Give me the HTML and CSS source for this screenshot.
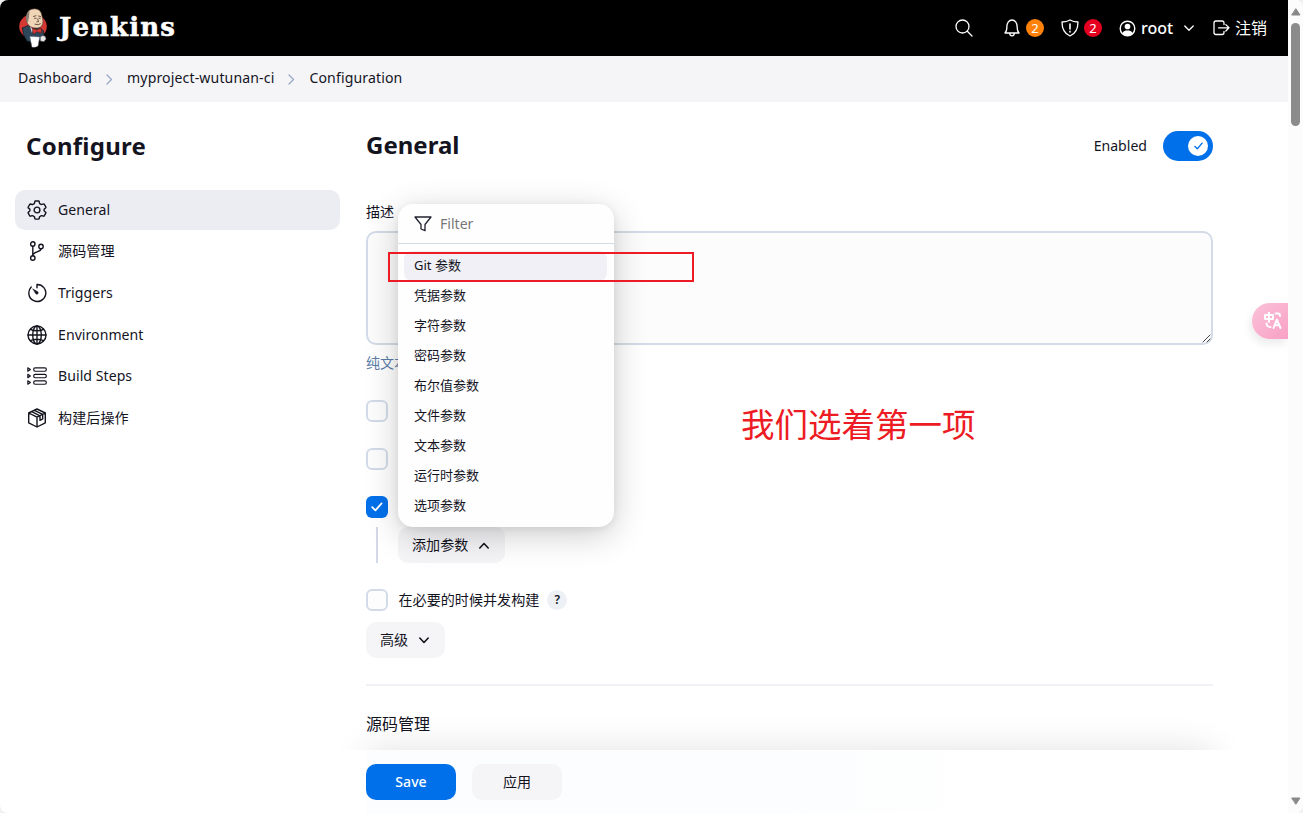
FILE: index.html
```html
<!DOCTYPE html>
<html lang="zh-CN">
<head>
<meta charset="utf-8">
<title>Configuration - Jenkins</title>
<link rel="stylesheet" href="styles.css">
</head>
<body>
<div class="window">
  <div class="page">
    <header class="header">
      <svg class="logo" viewBox="0 0 30 40">
        <ellipse cx="14" cy="18.500" rx="13.800" ry="12.500" fill="#d33833"/>
        <path d="M3.500 20 L9 17.500 L14 21 L21 19.500 L24.500 23 L25 29 L17 35 L8 33 Q3 26 3.500 20Z" fill="#2c475a" stroke="#111d26" stroke-width=".7"/>
        <path d="M7.500 7 Q9 .8 15.500 .8 Q22 .8 23 8 L24 13 Q24 19 19 20 Q12 20.500 9.500 17 Q6.500 14 7.500 7Z" fill="#f0d6b7" stroke="#49372c" stroke-width=".6"/>
        <path d="M7.500 8 Q8 4 10.500 2.500 L10 9 L9 14.500 Q6 12 7.500 8Z" fill="#8b7f74"/>
        <path d="M14.500 8.500l2.500-.8M19.500 8l2 .5M15.500 10.300h1.600M20 10.300h1.300M18.600 11l1 2.600-1.700.3M16 16.300q3 1.200 5.500-.5" fill="none" stroke="#49372c" stroke-width=".8"/>
        <path d="M11 18.500 L14 21.500 L13 25Z" fill="#dfe8ee"/>
        <path d="M13.500 20.500 L17.800 22 L22 20 L22.500 25 L18 23.700 L14.500 26Z" fill="#d33833" stroke="#7b1515" stroke-width=".6"/>
        <path d="M11 28.500 L20.500 29 L19 38 Q16 40 13 39Z" fill="#fff" stroke="#889" stroke-width=".4"/>
        <path d="M21.500 29q2-1.800 4.500-.8l1 2.800-2 2.500-3.500-.5z" fill="#e8e8e8" stroke="#777" stroke-width=".5"/>
      </svg>
      <span class="wordmark">Jenkins</span>
      <div class="header-tools">
        <svg class="i-search" viewBox="0 0 18 18"><circle cx="7.500" cy="7.500" r="6.500"/><path d="M12.300 12.300l4.700 4.700"/></svg>
        <svg class="i-bell" viewBox="0 0 16 18"><path d="M1 14c1.600-1.600 1.900-3 1.900-6.500C2.900 4 5 1 8 1s5.100 3 5.100 6.500c0 3.500.3 4.900 1.900 6.500zM5.700 14.500c.2 3.200 4.400 3.200 4.600 0"/></svg>
        <span class="badge badge-orange">2</span>
        <svg class="i-shield" viewBox="0 0 18 18"><path d="M9 1C6.500 2.500 4 3 1 3c0 7.500 2 11.500 8 14 6-2.500 8-6.500 8-14-3 0-5.500-.5-8-2z"/><path d="M9 5v5M9 12.300v.6" stroke-width="1.600"/></svg>
        <span class="badge badge-red">2</span>
        <svg class="i-user" viewBox="0 0 18 18"><circle cx="9" cy="9" r="7.700" stroke-width="1.500"/><circle cx="9" cy="6.900" r="3" fill="#fff" stroke="none"/><path d="M3.500 14c1.300-2.600 3-3 5.500-3s4.200.4 5.500 3c-2.700 3.200-8.300 3.200-11 0z" fill="#fff" stroke="none"/></svg>
        <span class="user">root</span>
        <svg class="i-caret" viewBox="0 0 10 7"><path d="M.8 1l4.200 4.300L9.200 1"/></svg>
        <svg class="i-out" viewBox="0 0 17 16"><path d="M11 4.500V3.200C11 1.600 10.400 1 9 1H3C1.600 1 1 1.600 1 3v9.500c0 1.400.6 2 2 2h6c1.400 0 2-.6 2-2v-1.200M5.500 7.800H16M12.800 4.600L16 7.800l-3.200 3.200"/></svg>
        <span class="logout">注销</span>
      </div>
    </header>

    <nav class="crumbs">
      <span class="crumb">Dashboard</span>
      <svg viewBox="0 0 7 11"><path d="M1 1l4.500 4.500L1 10"/></svg>
      <span class="crumb">myproject-wutunan-ci</span>
      <svg viewBox="0 0 7 11"><path d="M1 1l4.500 4.500L1 10"/></svg>
      <span class="crumb">Configuration</span>
    </nav>

    <div class="body">
      <aside class="side">
        <h1>Configure</h1>
        <ul class="tasks">
          <li class="active"><svg viewBox="0 0 20 20"><path d="M8.400 1h3.200q.5 0 .6.600l.3 1.500q.1.500.6.700l.9.500q.4.200.9.100l1.500-.5q.5-.2.800.3l1.600 2.700q.3.500-.1.900l-1.200 1.100q-.4.300-.4.800v.700q0 .5.400.8l1.200 1.100q.4.400.1.900l-1.600 2.700q-.3.500-.8.300l-1.500-.5q-.5-.1-.9.100l-.9.500q-.5.200-.6.700l-.3 1.500q-.1.600-.6.600H8.400q-.5 0-.6-.6l-.3-1.500q-.1-.5-.6-.7l-.9-.5q-.4-.2-.9-.1l-1.500.5q-.5.200-.8-.3l-1.600-2.700q-.3-.5.1-.9l1.200-1.100q.4-.3.400-.8v-.7q0-.5-.4-.8L1.300 7.900q-.4-.4-.1-.9l1.600-2.700q.3-.5.8-.3l1.500.5q.5.100.9-.1l.9-.5q.5-.2.600-.7l.3-1.600q.1-.6.6-.6z"/><circle cx="10" cy="10" r="2.900"/></svg><span>General</span></li>
          <li class="up"><svg viewBox="0 0 20 20"><circle cx="5.800" cy="3" r="2.200"/><circle cx="5.800" cy="17" r="2.200"/><circle cx="14" cy="5.500" r="2.200"/><path d="M5.800 5.200v9.600M14 7.700c0 4-8.200 2.500-8.200 7"/></svg><span>源码管理</span></li>
          <li><svg viewBox="0 0 20 20"><path d="M4.200 4.100A8.500 8.500 0 1 0 10 1.500v3.300"/><path d="M6 6l4.800 2.800a1.400 1.400 0 1 1-2 2z" fill="#14141f" stroke-width=".5"/></svg><span>Triggers</span></li>
          <li><svg viewBox="0 0 20 20"><circle cx="10" cy="10" r="9"/><ellipse cx="10" cy="10" rx="4.300" ry="9"/><path d="M10 1v18M1 10h18M3.500 4.300c3.500 2 9.500 2 13 0M3.500 15.700c3.500-2 9.500-2 13 0"/></svg><span>Environment</span></li>
          <li><svg class="thin" viewBox="0 0 20 20"><rect x="6.700" y="1.800" width="12.600" height="3.400" rx="1.400"/><rect x="6.700" y="8.300" width="12.600" height="3.400" rx="1.400"/><rect x="6.700" y="14.800" width="12.600" height="3.400" rx="1.400"/><path d="M.8 1.800L3.400 3.500.8 5.200zM.8 8.300l2.600 1.700-2.600 1.700zM.8 14.800l2.600 1.700-2.600 1.700z"/></svg><span>Build Steps</span></li>
          <li><svg viewBox="0 0 20 20"><path d="M10 1l8.300 4v9.800L10 19l-8.300-4.200V5zM1.700 5L10 9.200 18.300 5M10 9.200V19M4.700 3.700l8.300 4.200v4.500l2.700-1.500V6.400L7.400 2.300"/></svg><span>构建后操作</span></li>
        </ul>
      </aside>

      <main class="main">
        <div class="title-row">
          <h2>General</h2>
          <span class="enabled">Enabled</span>
          <span class="toggle"><span class="knob"><svg viewBox="0 0 10 9"><path d="M1 5l2.700 2.700L9 1.300"/></svg></span></span>
        </div>
        <div class="label">描述</div>
        <div class="textarea"><svg class="grip" viewBox="0 0 9 9"><path d="M1 8L8 1M5 8l3-3"/></svg></div>
        <div class="preview">纯文本</div>
        <div class="checks">
          <span class="check"></span>
          <span class="check"></span>
          <span class="check on"><svg viewBox="0 0 12 10"><path d="M1.200 5.200l3.200 3.200 6.200-7"/></svg></span>
        </div>
        <div class="nested">
          <div class="popup-anchor">
            <button class="btn add">添加参数<svg viewBox="0 0 10 7"><path d="M.8 6L5 1.500 9.200 6"/></svg></button>
            <div class="menu">
              <div class="filter"><svg viewBox="0 0 18 16"><path d="M1 1h16l-6 7.500v6.200l-4-1.700V8.500z"/></svg><span>Filter</span></div>
              <ul>
                <li class="hover">Git 参数</li>
                <li>凭据参数</li>
                <li>字符参数</li>
                <li>密码参数</li>
                <li>布尔值参数</li>
                <li>文件参数</li>
                <li>文本参数</li>
                <li>运行时参数</li>
                <li>选项参数</li>
              </ul>
            </div>
          </div>
        </div>
        <div class="concurrent"><span class="check"></span><span class="ctext">在必要的时候并发构建</span><span class="help">?</span></div>
        <button class="btn adv">高级<svg viewBox="0 0 10 7"><path d="M.8 1L5 5.500 9.200 1"/></svg></button>
        <div class="rule"></div>
        <div class="section">源码管理</div>
        <div class="actions">
          <button class="btn save">Save</button>
          <button class="btn apply">应用</button>
        </div>
      </main>
    </div>
  </div>
  <div class="scrollbar">
    <svg viewBox="0 0 10 8"><path d="M5 1l4 6H1z"/></svg>
    <div class="thumb"></div>
    <svg class="down" viewBox="0 0 10 8"><path d="M1 1h8L5 7z"/></svg>
  </div>
  <div class="translate"><svg viewBox="0 0 18 17"><path d="M1 3h8v4H1zM5 .5V10M11.500 1.500H14q2 0 2 2.500M2.500 11.500q0 3.500 4 3.500M9.500 16l3.300-8.500L16.500 16M10.800 13.200h4.400"/></svg></div>
  <div class="mark-box"></div>
  <div class="mark-text">我们选着第一项</div>
</div>
</body>
</html>
```
FILE: styles.css
```css
* { box-sizing: border-box; }
body { margin: 0; background: #f0f1f3; color: #14141f; font: 14.080px/20px "Noto Sans", "Noto Sans CJK SC", sans-serif; }
h1, h2, ul { margin: 0; padding: 0; }
ul { list-style: none; }
svg { display: block; flex: none; fill: none; stroke: currentColor; stroke-width: 1.4; stroke-linejoin: round; stroke-linecap: round; }
.window { position: relative; display: flex; width: 1303px; height: 813px; overflow: hidden; border-radius: 8px; background: #fff; }
.page { width: 1288px; height: 813px; display: flex; flex-direction: column; overflow: hidden; }

.header { height: 56px; flex: none; background: #000; color: #fff; display: flex; align-items: center; padding: 0 18px 0 19px; }
.logo { width: 30px; height: 40px; stroke: none; }
.wordmark { font: bold 26px/34px "DejaVu Serif", serif; letter-spacing: 1.100px; -webkit-text-stroke: .5px #fff; margin: -3px 0 0 10px; }
.header-tools { margin-left: auto; display: flex; align-items: center; }
.header-tools svg { stroke-width: 1.300; }
.i-search { width: 18px; height: 18px; margin-right: 31px; }
.i-bell { width: 16px; height: 18px; margin-right: 6px; }
.badge { width: 18px; height: 18px; border-radius: 9px; font-size: 13px; line-height: 18px; text-align: center; }
.badge-orange { background: #fe820a; margin-right: 17px; }
.badge-red { background: #e6001f; margin-right: 17px; }
.header-tools .i-shield { width: 18px; height: 18px; margin-right: 5px; }
.i-user { width: 17px; height: 17px; margin-right: 5px; }
.user { font-size: 16px; font-weight: 500; width: 33px; margin-right: 10px; }
.i-caret { width: 10px; height: 7px; margin-right: 19px; }
.i-out { width: 17px; height: 16px; margin-right: 5px; }
.logout { font-size: 16px; width: 35px; }

.crumbs { height: 46px; flex: none; background: #f5f5f8; display: flex; align-items: center; padding: 0 18px 2px; }
.crumb { letter-spacing: .13px; }
.crumbs svg { width: 7px; height: 11px; margin: 2px 14px 0 14px; color: #98a8c4; stroke-width: 1.300; }

.body { flex: 1; display: flex; min-height: 0; }
.side { width: 340px; padding: 26px 0 0 15px; }
.side h1 { font-size: 24px; line-height: 36px; padding-left: 11px; letter-spacing: .25px; }
.tasks { margin-top: 26px; display: flex; flex-direction: column; gap: 1.600px; }
.tasks li { height: 40px; border-radius: 10px; display: flex; align-items: center; padding-left: 12px; gap: 11px; letter-spacing: .05px; }
.tasks .active { background: #ecedf3; }
.tasks .up { padding-bottom: 1px; }
.tasks svg { width: 20px; height: 20px; }
.tasks .thin { stroke-width: 1.150; }

.main { margin-left: 26px; width: 847px; display: flex; flex-direction: column; }
.title-row { display: flex; align-items: center; height: 36px; margin-top: 26px; }
.title-row h2 { font-size: 24px; line-height: 36px; flex: 1; margin-top: -2px; }
.enabled { margin-right: 16px; }
.toggle { width: 50px; height: 30px; border-radius: 15px; background: #0070ea; display: flex; justify-content: flex-end; align-items: center; padding: 5px; }
.knob { width: 20px; height: 20px; border-radius: 50%; background: #fff; color: #0070ea; display: grid; place-items: center; }
.knob svg { width: 9px; height: 8px; stroke-width: 1.600; }
.label { margin-top: 38px; }
.textarea { margin-top: 9px; height: 114px; border: 2px solid #d3dbe8; border-radius: 10px; background: #fcfcfd; display: flex; align-items: flex-end; justify-content: flex-end; }
.grip { width: 9px; height: 9px; stroke-width: .9; color: #333; }
.preview { margin-top: 8px; color: #5a7da8; }
.checks { margin-top: 27px; display: flex; flex-direction: column; gap: 26px; }
.check { width: 22px; height: 22px; flex: none; border: 2px solid #d3dbe8; border-radius: 6px; background: #fdfdfe; }
.check.on { background: #0070ea; border: 0; color: #fff; display: grid; place-items: center; }
.check svg { width: 12px; height: 10px; stroke-width: 1.800; }
.nested { height: 36px; margin: 9px 0 0 10px; padding-left: 20px; border-left: 2px solid #d3d9e6; }
.popup-anchor { position: relative; width: 107px; }
.btn { height: 36px; border: 0; border-radius: 10px; background: #f5f5f8; color: inherit; font: inherit; padding: 0; display: flex; align-items: center; justify-content: center; gap: 11px; }
.btn svg { width: 10px; height: 7px; stroke-width: 1.600; }
.btn.add, .btn.adv { justify-content: flex-start; padding-left: 14px; }
.btn.add { width: 107px; }
.menu { position: absolute; left: 0; bottom: 36px; width: 216px; height: 323px; z-index: 2; background: #fefefe; border-radius: 15px; box-shadow: 0 8px 34px rgba(0, 0, 0, .2), 0 2px 8px rgba(0, 0, 20, .07); }
.filter { height: 40px; border-bottom: 1px solid #d3dbe8; display: flex; align-items: center; gap: 8px; padding-left: 16px; color: #777; }
.filter svg { width: 18px; height: 16px; color: #222230; stroke-width: 1.300; }
.menu ul { padding: 7px 7px 0 6px; }
.menu li { height: 30px; border-radius: 8px; padding: 0 10px; font-size: 13px; line-height: 29px; }
.menu .hover { background: #f1f0f6; }
.concurrent { margin-top: 26px; display: flex; align-items: center; height: 22px; }
.ctext { margin-left: 10.500px; }
.help { width: 20px; height: 20px; margin-left: 8px; border-radius: 50%; background: #edf0f4; font-size: 12px; font-weight: 600; text-align: center; }
.btn.adv { width: 79px; margin-top: 11px; }
.rule { height: 2px; background: #f1f1f7; margin-top: 26px; }
.section { font-size: 16px; line-height: 24px; margin-top: 26px; }
.actions {
  height: 63px; margin-top: 14px; padding-top: 14px; display: flex; gap: 16px;
  background: linear-gradient(90deg, #fcfdfe, #fcfdfe 50%, #fff 78%);
  box-shadow: 0 0 36px rgba(0, 0, 0, .12);
  /* keeps the shadow above the bar only */
  clip-path: polygon(-40px -40px, calc(100% + 40px) -40px, calc(100% + 40px) 0, 100% 0, 100% 100%, 0 100%, 0 0, -40px 0);
}
.save, .apply { width: 90px; }
.save { background: #0070ea; color: #fff; font-weight: 500; }

.scrollbar { width: 15px; background: #fcfcfc; display: flex; flex-direction: column; align-items: center; padding: 8px 0; }
.scrollbar svg { width: 10px; height: 8px; fill: #888; stroke: #888; stroke-width: 1; }
.thumb { width: 9px; height: 103px; margin-top: 7px; border-radius: 5px; background: #8b8b8b; }
.scrollbar .down { margin-top: auto; }

.translate { position: absolute; left: 1252px; top: 303px; width: 36px; height: 36px; border-radius: 18px 0 0 18px; background: linear-gradient(135deg, #fbc2d9, #f8a0c5); box-shadow: -2px 5px 9px rgba(0, 0, 0, .08); clip-path: inset(-20px 0 -20px -20px); display: grid; place-items: center; padding: 0 0 2px 5px; color: #fff; }
.translate svg { width: 18px; height: 17px; stroke-width: 1.900; }
.mark-box { position: absolute; z-index: 5; left: 388px; top: 252px; width: 306px; height: 30px; border: 2px solid #ed1c24; }
.mark-text { position: absolute; left: 741px; top: 400px; font-size: 33.500px; line-height: 48px; color: #ed1c24; white-space: nowrap; }
```
